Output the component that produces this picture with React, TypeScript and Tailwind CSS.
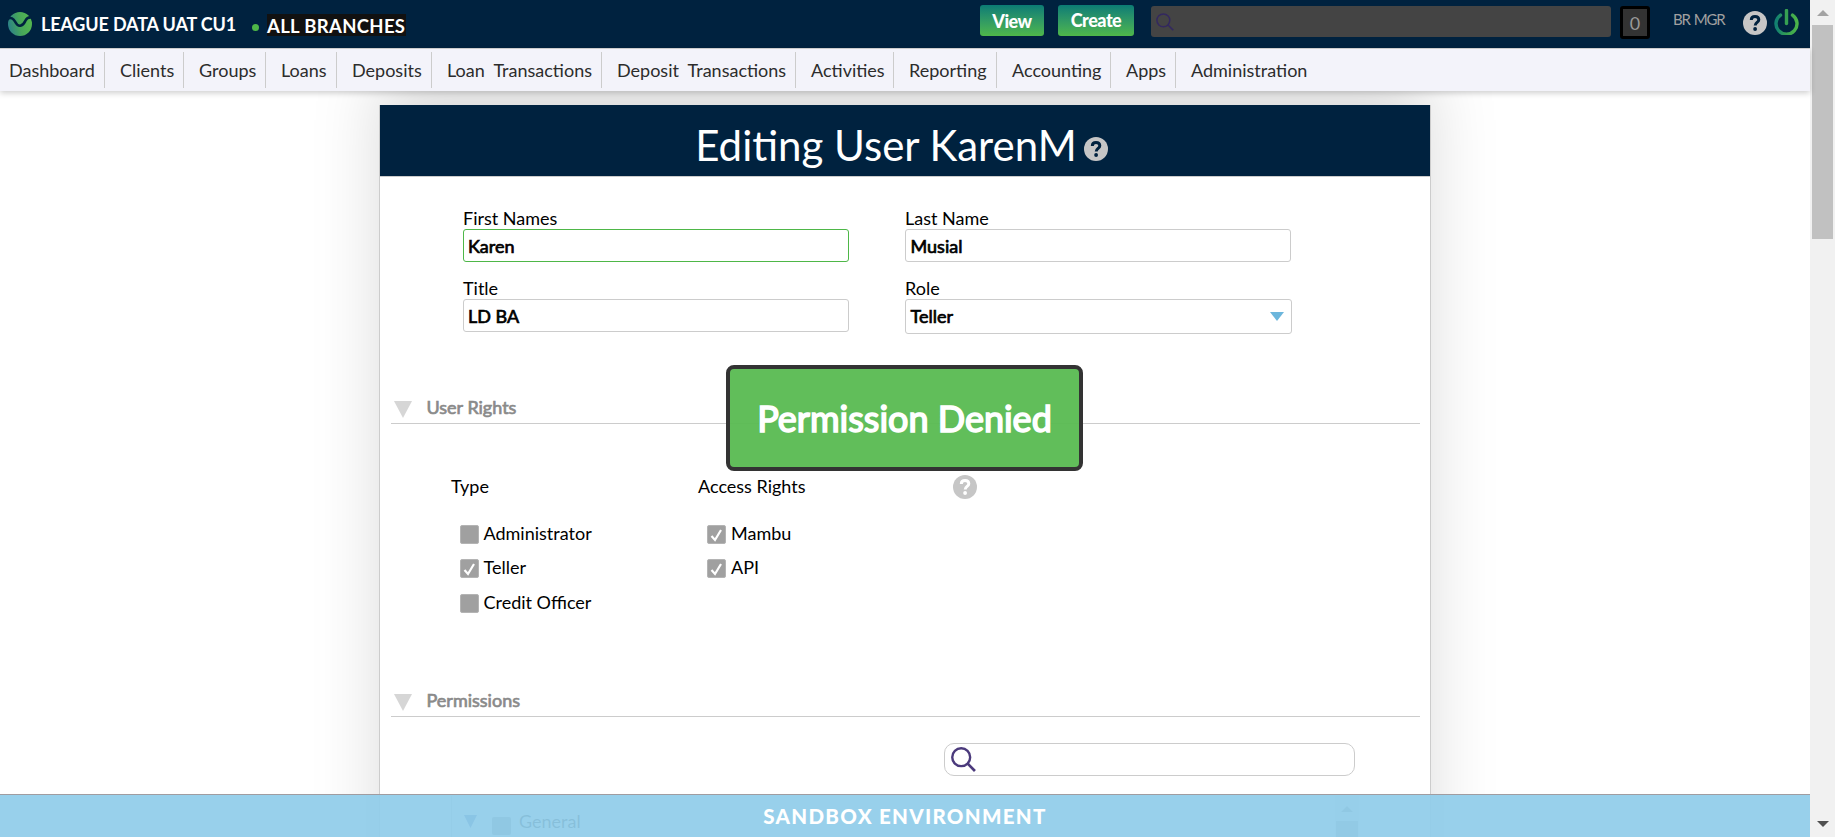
import React from "react";

const NAV = [
  { label: "Dashboard", cls: "w-[105px] pl-[9px]" },
  { label: "Clients", cls: "w-[79px] pl-[15px]" },
  { label: "Groups", cls: "w-[82px] pl-[15px]" },
  { label: "Loans", cls: "w-[71px] pl-[15px]" },
  { label: "Deposits", cls: "w-[95px] pl-[15px]" },
  { label: "Loan\u00a0 Transactions", cls: "w-[170px] pl-[15px]" },
  { label: "Deposit\u00a0 Transactions", cls: "w-[194px] pl-[15px]" },
  { label: "Activities", cls: "w-[98px] pl-[15px]" },
  { label: "Reporting", cls: "w-[103px] pl-[15px]" },
  { label: "Accounting", cls: "w-[114px] pl-[15px]" },
  { label: "Apps", cls: "w-[65px] pl-[15px]" },
];

function Logo() {
  return (
    <svg viewBox="0 0 24 24" className="size-6 shrink-0">
      <defs>
        <linearGradient id="lg" x1="0" y1="0.6" x2="1" y2="0.4">
          <stop offset="0" stopColor="#2b8088" />
          <stop offset="0.5" stopColor="#46a65a" />
          <stop offset="1" stopColor="#55b84e" />
        </linearGradient>
      </defs>
      <circle cx="12" cy="12" r="12" fill="url(#lg)" />
      <path d="M-0.500 6.800C3 5 5.500 6.500 7 9.500C8.500 12.500 10 14 12.300 13.700C15.500 13.200 16.500 10.500 17.500 8.500C18.700 6.200 20.500 5 23.500 5.500" fill="none" stroke="#00223f" strokeWidth="2.600" />
    </svg>
  );
}

function Help({ mark, className }: { mark: string; className: string }) {
  return (
    <svg viewBox="0 0 24 24" preserveAspectRatio="none" className={className}>
      <circle cx="12" cy="12" r="12" fill="#c6c6c6" />
      <path d="M8.300 8.900C8.300 6.700 9.900 5.600 12 5.600C14.200 5.600 15.800 6.800 15.800 8.800C15.800 11.400 12.200 11.500 12.200 14.500" fill="none" stroke={mark} strokeWidth="3" />
      <circle cx="12.100" cy="18" r="1.900" fill={mark} />
    </svg>
  );
}

function Magnifier({ color, width, className }: { color: string; width: number; className: string }) {
  return (
    <svg viewBox="0 0 24 24" className={className}>
      <circle cx="9.800" cy="9.800" r="8.600" fill="none" stroke={color} strokeWidth={width} />
      <path d="M16 16L23 23" stroke={color} strokeWidth={width + 0.3} />
    </svg>
  );
}

function Check({ label, checked, gap = "pl-[4.500px]" }: { label: string; checked?: boolean; gap?: string }) {
  return (
    <div className="flex h-[34.500px] items-center pl-[9px]">
      <span className="flex h-[19px] w-[19px] items-center justify-center rounded-[2px] border border-[#b4b4b4] bg-[#a0a0a0]">
        {checked && (
          <svg viewBox="0 0 19 19" className="size-[19px] shrink-0">
            <path d="M4.500 11L8 15L14 5" fill="none" stroke="#fff" strokeWidth="2.200" />
          </svg>
        )}
      </span>
      <span className={`pb-[3px] leading-none ${gap}`}>{label}</span>
    </div>
  );
}

function Field({ label, value, box }: { label: string; value: string; box: string }) {
  return (
    <div className="flex h-[70px] w-[442px] flex-col">
      <span className="h-[20px] leading-[18px]">{label}</span>
      <div className={`flex items-start rounded-[3px] border text-[18px] [-webkit-text-stroke:0.7px_#000] ${box}`}>
        <span className="grow pt-[5px] leading-[22px]">{value}</span>
        {label === "Role" && (
          <svg viewBox="0 0 14 9" className="mt-[12px] mr-[7px] h-[9px] w-[14px]">
            <path d="M0 0H14L7 9Z" fill="#6cb6dc" />
          </svg>
        )}
      </div>
    </div>
  );
}

function Section({ title }: { title: string }) {
  return (
    <div className="mr-[10px] ml-[11px] flex h-[34px] shrink-0 items-center border-b border-[#ccc] pl-[3px] text-[18px] text-[#8a8a8a] [-webkit-text-stroke:0.7px_#8a8a8a]">
      <svg viewBox="0 0 18 17" className="mt-[6px] h-[17px] w-[18px]">
        <path d="M0 0H18L9 17Z" fill="#d6d6d6" />
      </svg>
      <span className="pt-[2px] pl-[14.500px]">{title}</span>
    </div>
  );
}

export default function App() {
  return (
    <div className="relative flex h-[837px] w-[1835px] overflow-hidden bg-white font-['Lato',sans-serif] text-[18px] text-black">
      <div className="flex w-[1810px] flex-col">
        <header className="z-10 flex h-12 shrink-0 items-start bg-[#00223f] pl-2 text-white">
          <div className="flex w-[972px] items-center pt-3">
            <Logo />
            <span className="w-[218px] pl-[9px] text-[18px] font-bold leading-6 tracking-[-0.150px] whitespace-nowrap">LEAGUE DATA UAT CU1</span>
            <span className="mr-2 ml-[2px] mt-[6px] size-[7px] rounded-full bg-[#4eb748]" />
            <span className="mt-[2px] h-[22px] w-[139px] bg-[#111] text-[18.500px] font-bold leading-[24px] tracking-[0.320px] whitespace-nowrap">ALL BRANCHES</span>
          </div>
          <button className="mt-[5px] mr-[14px] h-[31px] w-16 rounded-[3px] bg-linear-to-b from-[#0a7c74] to-[#4eb748] pt-px text-[18px] font-black tracking-[-0.500px]">View</button>
          <button className="mt-[5px] mr-[17px] h-[31px] w-[76px] rounded-[3px] bg-linear-to-b from-[#0a7c74] to-[#4eb748] pb-px text-[18px] font-black tracking-[-0.500px]">Create</button>
          <div className="mt-[6px] h-[31px] w-[460px] rounded-[3px] bg-[#444] pt-[7px] pl-[5px]">
            <Magnifier color="#33285f" width={2} className="size-[18px]" />
          </div>
          <div className="mt-[6px] ml-[9px] flex h-[33px] w-[30px] items-center justify-center rounded-[3px] border-[3px] border-black bg-[#333] pt-px text-[18px] text-[#999]">0</div>
          <span className="mt-[8px] ml-[23px] w-[70px] text-[15px] leading-[22px] tracking-[-1.200px] [word-spacing:1.500px] text-[#a0a0a0]">BR MGR</span>
          <Help mark="#00223f" className="mt-[11px] h-6 w-6" />
          <svg viewBox="0 0 25 26" className="mt-[9px] ml-[7px] h-[26px] w-[25px]">
            <defs>
              <linearGradient id="pw" x1="0" y1="0" x2="25" y2="0" gradientUnits="userSpaceOnUse">
                <stop offset="0.100" stopColor="#128070" />
                <stop offset="0.500" stopColor="#36a052" />
                <stop offset="1" stopColor="#50b848" />
              </linearGradient>
            </defs>
            <path d="M6.500 6.100A10.500 10.500 0 1 0 18.500 6.100" fill="none" stroke="url(#pw)" strokeWidth="3.400" strokeLinecap="round" />
            <path d="M12.500 1.500V14.500" stroke="#36a052" strokeWidth="3.400" strokeLinecap="round" />
          </svg>
        </header>

        <nav className="z-10 flex h-[43px] shrink-0 border-t border-[#ccc] bg-[#f3f3fa] pt-[3px] text-[18px] text-[#2c2c2c] shadow-[0_2px_6px_rgba(0,0,0,0.200)]">
          {NAV.map((n) => (
            <a key={n.label} className={`h-9 shrink-0 border-r border-[#ccc] leading-[36px] whitespace-nowrap ${n.cls}`}>{n.label}</a>
          ))}
          <a className="pl-[15px] leading-[36px]">Administration</a>
        </nav>

        <main className="mt-[14px] ml-[379px] flex h-[900px] w-[1052px] shrink-0 flex-col border-x border-[#ccc] bg-white shadow-[0_-30px_64px_rgba(0,0,0,0.145)]">
          <h1 className="flex h-[72px] shrink-0 items-center justify-center border-b border-[#ccc] bg-[#00223f] pt-[10px] pr-[7px] text-[42px] text-white">
            Editing User KarenM
            <Help mark="#00223f" className="mt-[6px] ml-[7px] h-6 w-6" />
          </h1>
          <div className="mt-[32px] flex h-[180px] flex-wrap content-start pl-[83px]">
            <Field label="First Names" value="Karen" box="h-[33px] w-[386px] border-[#4eb748] pl-[4px]" />
            <Field label="Last Name" value="Musial" box="h-[33px] w-[386px] border-[#ccc] pl-[4.500px]" />
            <Field label="Title" value="LD BA" box="h-[33px] w-[386px] border-[#ccc] pl-[4px]" />
            <Field label="Role" value="Teller" box="h-[35px] w-[387px] border-[#ccc] pl-[4.500px]" />
          </div>
          <div className="mt-px">
            <Section title="User Rights" />
          </div>
          <div className="mt-[50px] flex h-[209px] shrink-0 pl-[71px]">
            <div className="w-[247px]">
              <div className="h-[43px] leading-[25px]">Type</div>
              <Check label="Administrator" />
              <Check label="Teller" checked />
              <Check label="Credit Officer" />
            </div>
            <div className="w-[255px]">
              <div className="h-[43px] leading-[25px]">Access Rights</div>
              <Check label="Mambu" checked gap="pl-[5px]" />
              <Check label="API" checked gap="pl-[5px]" />
            </div>
            <Help mark="#fff" className="mt-px h-6 w-6" />
          </div>
          <Section title="Permissions" />
          <div className="mt-[26px] ml-[564px] h-[33px] w-[411px] shrink-0 rounded-[10px] border border-[#ccc] pt-[3px] pl-[5.500px]">
            <Magnifier color="#4b3a7c" width={2.3} className="size-[25px]" />
          </div>
          <div className="mt-[20px] ml-[71px] flex h-20 w-[908px] shrink-0 border-l border-[#ccc]">
            <svg viewBox="0 0 13 13" className="mt-[19px] ml-3 h-[13px] w-[13px]">
              <path d="M0 0H13L6.500 13Z" fill="#3a5fa8" />
            </svg>
            <span className="mt-[21px] ml-[15px] h-[18px] w-[19px] rounded-[2px] bg-[#8a8a8a]" />
            <span className="mt-[12px] ml-2 grow text-[18px] text-[#111]">General</span>
            <div className="w-6 bg-[#f1f1f1] px-px pt-[10px]">
              <svg viewBox="0 0 12 6" className="mx-auto h-[6px] w-3">
                <path d="M0 6H12L6 0Z" fill="#8a8a8a" />
              </svg>
              <div className="mt-[9px] h-12 bg-[#a8a8a8]" />
            </div>
          </div>
        </main>
      </div>

      <aside className="flex w-[25px] flex-col items-center bg-[#f1f1f1]">
        <svg viewBox="0 0 12 6" className="mt-[10px] h-[6px] w-3">
          <path d="M0 6H12L6 0Z" fill="#a3a3a3" />
        </svg>
        <div className="mt-[9px] h-[214px] w-[21px] bg-[#c1c1c1]" />
        <svg viewBox="0 0 12 6" className="mt-auto mb-[10px] h-[6px] w-3">
          <path d="M0 0H12L6 6Z" fill="#505050" />
        </svg>
      </aside>

      <div className="absolute top-[365px] left-[726px] z-20 flex h-[106px] w-[357px] items-center justify-center rounded-lg border-4 border-[#333] bg-[#59bb51]/95 text-[36px] text-white [-webkit-text-stroke:1.6px_#fff]">
        Permission Denied
      </div>

      <footer className="absolute bottom-0 left-0 z-20 flex h-[43px] w-[1810px] items-center justify-center border-t border-[#a09ca0] bg-[#90ccea]/93 pt-px text-[20.500px] font-black tracking-[1.300px] text-white">
        SANDBOX ENVIRONMENT
      </footer>
    </div>
  );
}
